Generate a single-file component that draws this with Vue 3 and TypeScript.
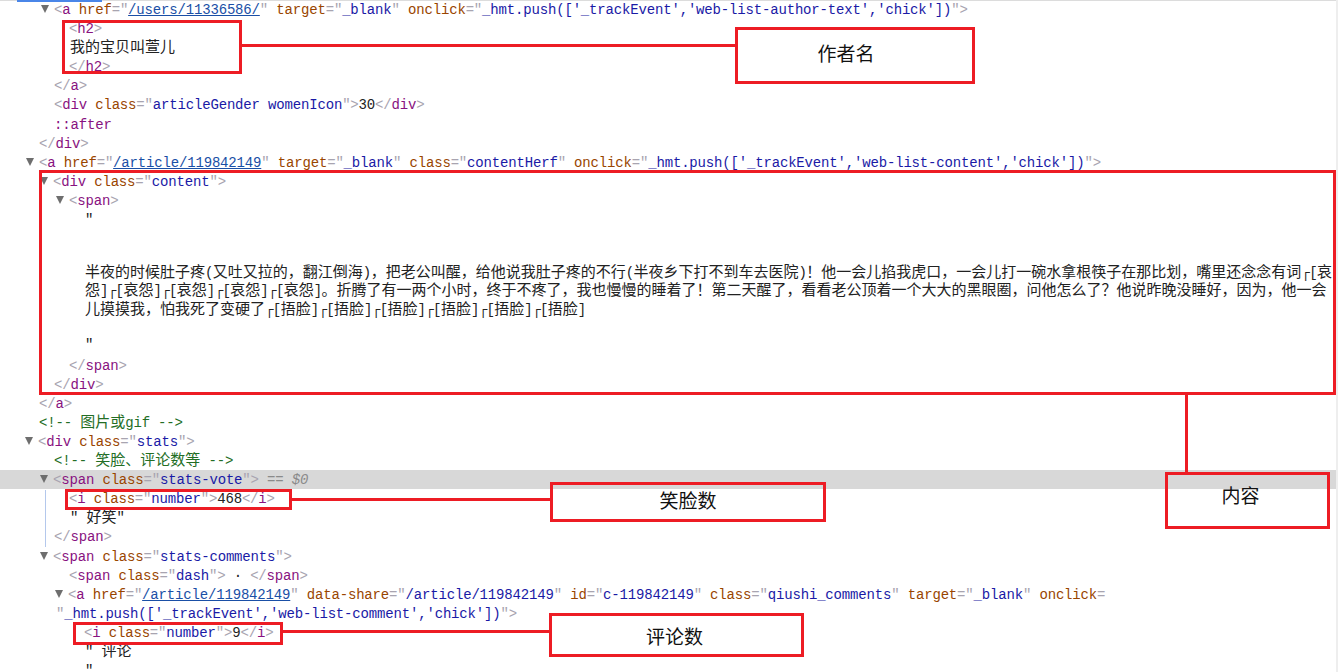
<script setup lang="ts">
type Kind = 'code' | 'text' | 'comment'
interface Row {
  x: number
  src: string
  kind?: Kind
  open?: boolean
  cls?: string
  after?: string
}
interface Tok {
  c: string
  t: string
}

const rawRows: Row[] = [
  { x: 54, open: true, src: `<a href="/users/11336586/" target="_blank" onclick="_hmt.push(['_trackEvent','web-list-author-text','chick'])">` },
  { x: 69, src: '<h2>' },
  { x: 70, kind: 'text', src: '我的宝贝叫萱儿' },
  { x: 69, src: '</h2>' },
  { x: 54, src: '</a>' },
  { x: 54, src: '<div class="articleGender womenIcon">30</div>' },
  { x: 54, src: '::after', cls: 'pseudo' },
  { x: 39, src: '</div>' },
  { x: 39, open: true, src: `<a href="/article/119842149" target="_blank" class="contentHerf" onclick="_hmt.push(['_trackEvent','web-list-content','chick'])">` },
  { x: 53, open: true, src: '<div class="content">' },
  { x: 69, open: true, src: '<span>' },
  { x: 85, kind: 'text', src: '"' },
  { x: 85, kind: 'text', cls: 'prose gap-a', src: '半夜的时候肚子疼(又吐又拉的，翻江倒海)，把老公叫醒，给他说我肚子疼的不行(半夜乡下打不到车去医院)！他一会儿掐我虎口，一会儿打一碗水拿根筷子在那比划，嘴里还念念有词┌[哀' },
  { x: 85, kind: 'text', cls: 'prose', src: '怨]┌[哀怨]┌[哀怨]┌[哀怨]┌[哀怨]。折腾了有一两个小时，终于不疼了，我也慢慢的睡着了！第二天醒了，看看老公顶着一个大大的黑眼圈，问他怎么了？他说昨晚没睡好，因为，他一会' },
  { x: 85, kind: 'text', cls: 'prose', src: '儿摸摸我，怕我死了变硬了┌[捂脸]┌[捂脸]┌[捂脸]┌[捂脸]┌[捂脸]┌[捂脸]' },
  { x: 85, kind: 'text', cls: 'gap-b', src: '"' },
  { x: 69, cls: 'gap-c', src: '</span>' },
  { x: 54, src: '</div>' },
  { x: 39, src: '</a>' },
  { x: 39, kind: 'comment', src: '<!-- 图片或gif -->' },
  { x: 38, open: true, src: '<div class="stats">' },
  { x: 54, kind: 'comment', src: '<!-- 笑脸、评论数等 -->' },
  { x: 53, open: true, cls: 'sel', src: '<span class="stats-vote">', after: ' == $0' },
  { x: 69, src: '<i class="number">468</i>' },
  { x: 70, kind: 'text', src: '" 好笑"' },
  { x: 54, src: '</span>' },
  { x: 53, open: true, src: '<span class="stats-comments">' },
  { x: 69, src: '<span class="dash"> · </span>' },
  { x: 68, open: true, src: '<a href="/article/119842149" data-share="/article/119842149" id="c-119842149" class="qiushi_comments" target="_blank" onclick=' },
  { x: 56, src: `"_hmt.push(['_trackEvent','web-list-comment','chick'])">` },
  { x: 84, src: '<i class="number">9</i>' },
  { x: 85, kind: 'text', src: '" 评论' },
  { x: 85, kind: 'text', src: '"' },
]

// Split a run into CJK and Latin pieces, which are set in different fonts.
function splitZh(t: string, c: string): Tok[] {
  const out: Tok[] = []
  for (const m of t.matchAll(/[\u3000-\u9fff\uff00-\uffef]+|[^\u3000-\u9fff\uff00-\uffef]+/g)) {
    const zh = /[\u3000-\u9fff\uff00-\uffef]/.test(m[0])
    out.push({ c: zh ? `${c} zh` : c, t: m[0] })
  }
  return out
}

// A small stand-in for the devtools Elements panel's markup highlighter.
function highlight(src: string): Tok[] {
  const out: Tok[] = []
  const re = /(<\/?)([\w-]+)|(\s[\w-]+)(=)|"([^"]*)"|(>)|([^<>"\s=]+|\s+|=)/g
  let attr = ''
  for (const m of src.matchAll(re)) {
    if (m[1]) {
      out.push({ c: 'br', t: m[1] }, { c: 'tag', t: m[2] })
    } else if (m[3]) {
      attr = m[3].trim()
      out.push({ c: 'attr', t: m[3] }, { c: 'br', t: '=' })
    } else if (m[5] !== undefined) {
      out.push({ c: 'br', t: '"' }, { c: attr === 'href' ? 'val link' : 'val', t: m[5] }, { c: 'br', t: '"' })
    } else if (m[6]) {
      out.push({ c: 'br', t: '>' })
    } else {
      out.push({ c: 'txt', t: m[7] })
    }
  }
  return out
}

const rows = rawRows.map((r) => {
  let toks: Tok[]
  if (r.kind === 'text') toks = splitZh(r.src, 'txt')
  else if (r.kind === 'comment') toks = splitZh(r.src, 'cmt')
  else if (r.cls === 'pseudo') toks = [{ c: 'tag', t: r.src }]
  else toks = highlight(r.src)
  return { ...r, toks }
})
</script>

<template>
  <div class="page">
    <div class="topline"><div class="progress"></div></div>
    <div class="panel">
      <div
        v-for="(r, i) in rows"
        :key="i"
        class="row"
        :class="r.cls"
        :style="{ paddingLeft: r.x + 'px' }"
      >
        <span v-if="r.open" class="arrow"></span>
        <span v-for="(t, j) in r.toks" :key="j" :class="t.c">{{ t.t }}</span>
        <span v-if="r.after" class="dollar">{{ r.after }}</span>
      </div>
    </div>

    <div class="guide"></div>

    <div class="box b-h2"></div>
    <div class="hline l-h2"></div>
    <div class="box label t-author">作者名</div>

    <div class="box b-content"></div>
    <div class="vline"></div>
    <div class="box label t-content">内容</div>

    <div class="box b-vote"></div>
    <div class="hline l-vote"></div>
    <div class="box label t-vote">笑脸数</div>

    <div class="box b-comment"></div>
    <div class="hline l-comment"></div>
    <div class="box label t-comment">评论数</div>
  </div>
</template>

<style>
html,
body {
  margin: 0;
  background: #fff;
}
</style>

<style scoped>
.page {
  position: relative;
  width: 1336px;
  height: 672px;
  overflow: hidden;
  background: #fff;
  border-right: 2px solid #eeeeee;
  font-family: "Liberation Mono", monospace;
  font-size: 14px;
}
.topline {
  height: 1px;
  background: #dcdcdc;
  position: absolute;
  left: 0;
  right: 0;
  top: 0;
}
.progress {
  width: 85px;
  height: 2px;
  margin-left: 17px;
  background: #4a86e8;
}
.row {
  height: 19.1px;
  line-height: 21.5px;
  white-space: pre;
  letter-spacing: -0.17px;
  color: #222;
}
.prose {
  height: 18.7px;
  line-height: 18.7px;
}
.prose .txt {
  letter-spacing: -0.6px;
}
.gap-a {
  margin-top: 33.4px;
}
.gap-b {
  margin-top: 16.4px;
}
.gap-c {
  margin-top: 1.5px;
}
.sel {
  background: #d8d8d8;
}
.arrow {
  display: inline-block;
  width: 0;
  height: 0;
  margin-left: -13px;
  margin-right: 5px;
  border-left: 4px solid transparent;
  border-right: 4px solid transparent;
  border-top: 8px solid #6e6e6e;
  vertical-align: 1px;
}
.br {
  color: #a8a4b0;
}
.tag {
  color: #881280;
}
.attr {
  color: #994500;
}
.val {
  color: #1a1aa6;
}
.link {
  text-decoration: underline;
  color: #1a4fa6;
}
.txt {
  color: #222;
}
.cmt {
  color: #236e25;
}
.row .zh {
  font-family: "Noto Sans CJK SC", sans-serif;
  font-size: 15px;
  letter-spacing: 0;
  line-height: 1;
}
.dollar {
  color: #8a8a8a;
  font-style: italic;
}
.guide {
  position: absolute;
  left: 45px;
  top: 490px;
  width: 1px;
  height: 57px;
  background: #b4c8ec;
}
.box {
  position: absolute;
  box-sizing: border-box;
  border: 3px solid #ed1c24;
}
.hline {
  position: absolute;
  height: 3px;
  background: #ed1c24;
}
.vline {
  position: absolute;
  left: 1185px;
  top: 394px;
  width: 3px;
  height: 80px;
  background: #ed1c24;
}
.label {
  display: flex;
  align-items: center;
  justify-content: center;
  font-family: "Noto Sans CJK SC", sans-serif;
  font-size: 19px;
  color: #111;
}
.b-h2 {
  left: 62px;
  top: 20px;
  width: 180px;
  height: 54px;
}
.l-h2 {
  left: 242px;
  top: 44px;
  width: 494px;
}
.t-author {
  left: 735px;
  top: 27px;
  width: 240px;
  height: 57px;
  padding: 0 18px 6px 0;
}
.b-content {
  left: 39px;
  top: 170px;
  width: 1297px;
  height: 225px;
}
.t-content {
  left: 1165px;
  top: 472px;
  width: 165px;
  height: 57px;
  padding: 0 14px 12px 0;
}
.b-vote {
  left: 65px;
  top: 489px;
  width: 227px;
  height: 21px;
}
.l-vote {
  left: 292px;
  top: 498px;
  width: 259px;
}
.t-vote {
  left: 550px;
  top: 482px;
  width: 276px;
  height: 40px;
  padding-bottom: 5px;
}
.b-comment {
  left: 73px;
  top: 622px;
  width: 210px;
  height: 23px;
}
.l-comment {
  left: 283px;
  top: 630px;
  width: 267px;
}
.t-comment {
  left: 549px;
  top: 613px;
  width: 255px;
  height: 44px;
  padding-right: 4px;
}
</style>
